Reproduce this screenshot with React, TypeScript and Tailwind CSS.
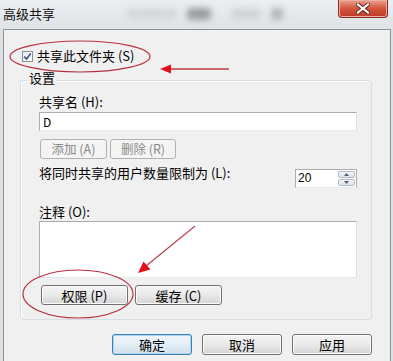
import React from "react";

const FONT = { fontFamily: '"Noto Sans CJK SC", "Noto Sans", sans-serif' };

function WinButton({
  label,
  className = "",
  disabled = false,
  isDefault = false,
}: {
  label: string;
  className?: string;
  disabled?: boolean;
  isDefault?: boolean;
}) {
  if (disabled) {
    return (
      <div
        className={`flex items-center justify-center rounded-[3px] border border-[#adb2b5] bg-[#f4f4f4] text-[12.5px] leading-none text-[#8a8a8a] ${className}`}
      >
        {label}
      </div>
    );
  }
  if (isDefault) {
    return (
      <div
        className={`flex items-center justify-center rounded-[3px] border border-[#3c7fb1] bg-gradient-to-b from-[#f0f6fa] via-[#e3eef6] to-[#cfdfea] text-[13px] leading-none text-black shadow-[inset_0_0_0_1px_#a9d6f3] ${className}`}
      >
        {label}
      </div>
    );
  }
  return (
    <div
      className={`flex items-center justify-center rounded-[3px] border border-[#707070] bg-gradient-to-b from-[#f4f4f4] via-[#e9e9e9] to-[#d4d4d4] text-[13px] leading-none text-black shadow-[inset_0_0_0_1px_#fbfbfb] ${className}`}
    >
      {label}
    </div>
  );
}

export default function App() {
  return (
    <div
      className="relative h-[361px] w-[393px] overflow-hidden bg-[#dde1e6] text-black"
      style={FONT}
    >
      {/* title bar */}
      <div className="flex h-[29px] items-start bg-gradient-to-b from-[#eceef0] to-[#dfe2e6]">
        <span className="pl-[3px] pt-[6px] text-[13px] leading-[16px] text-[#111]">高级共享</span>
        <div className="ml-[72px] mt-[9px] h-[10px] w-[50px] rounded-sm bg-[#d4d6d9] blur-[3px]" />
        <div className="ml-[10px] mt-[8px] h-[12px] w-[24px] rounded-sm bg-[#9a9da1] blur-[3px]" />
        <div className="ml-[20px] mt-[9px] h-[10px] w-[30px] rounded-sm bg-[#d0d2d5] blur-[3px]" />
        <div className="ml-[10px] mt-[8px] h-[12px] w-[12px] rounded-sm bg-[#b2b5b9] blur-[3px]" />
        <div className="ml-auto mr-[5px] flex h-[18px] w-[50px] items-center justify-center rounded-b-[4px] border border-t-0 border-[#8a2a1e] bg-gradient-to-b from-[#e8a08e] via-[#d2553c] to-[#c0392a] shadow-[inset_0_0_0_1px_#eab0a2]">
          <svg width="14" height="11" viewBox="0 0 14 11">
            <path
              d="M2 1.5 L12 9.5 M12 1.5 L2 9.5"
              stroke="#5a2018"
              strokeWidth="4"
              strokeLinecap="square"
            />
            <path
              d="M2 1.5 L12 9.5 M12 1.5 L2 9.5"
              stroke="#ffffff"
              strokeWidth="2.2"
              strokeLinecap="square"
            />
          </svg>
        </div>
      </div>

      {/* client area */}
      <div className="ml-[3px] mr-[2px] flex h-[332px] flex-col border border-b-0 border-[#8e9297] bg-[#f0f0f0]">
        {/* share checkbox */}
        <div className="ml-[18px] mt-[18px] flex h-[16px] items-center gap-[4px]">
          <div className="flex h-[11px] w-[11px] items-center justify-center border border-[#8f8f8f] bg-gradient-to-br from-[#e6e9ef] to-[#ffffff]">
            <svg width="9" height="9" viewBox="0 0 9 9">
              <path d="M1.2 4.6 L3.5 7 L7.8 1.4" fill="none" stroke="#3b4f8c" strokeWidth="1.6" />
            </svg>
          </div>
          <span className="text-[13px] leading-[16px]">共享此文件夹 (S)</span>
        </div>

        {/* settings group */}
        <div className="relative ml-[16px] mt-[16px] flex h-[240px] w-[352px] flex-col rounded-[3px] border border-[#d5dfe5] pl-[18px] shadow-[inset_1px_1px_0_#ffffff]">
          <span className="absolute left-[7px] top-[-11px] bg-[#f0f0f0] px-[1px] text-[13px] leading-[16px]">设置</span>

          <span className="mt-[13px] text-[13px] leading-[16px]">共享名 (H):</span>
          <div className="mt-[2px] flex h-[19px] w-[318px] items-center border border-[#abadb3] border-b-[#e3e9ef] border-r-[#dbdfe6] bg-white pl-[3px] text-[12px] leading-none">
            D
          </div>

          <div className="ml-px mt-[8px] flex gap-[3px]">
            <WinButton label="添加 (A)" disabled className="h-[20px] w-[67px]" />
            <WinButton label="删除 (R)" disabled className="h-[20px] w-[66px]" />
          </div>

          <div className="mt-[10px] flex w-[318px] items-start justify-between">
            <span className="-mt-[4px] text-[13px] leading-[16px]">将同时共享的用户数量限制为 (L):</span>
            <div className="flex h-[19px] w-[62px] border border-[#abadb3] border-b-[#e3e9ef] bg-white">
              <span className="flex-1 pl-[2px] text-[12px] leading-[17px]" style={{ fontFamily: '"Liberation Sans", sans-serif' }}>
                20
              </span>
              <div className="flex w-[19px] flex-col gap-px p-px">
                <div className="flex flex-1 items-center justify-center rounded-[2px] border border-[#b6bcc6] bg-gradient-to-b from-[#f3f5f8] to-[#dde3ea]">
                  <svg width="5" height="3" viewBox="0 0 5 3">
                    <path d="M0 3 L2.5 0 L5 3 Z" fill="#4d6185" />
                  </svg>
                </div>
                <div className="flex flex-1 items-center justify-center rounded-[2px] border border-[#b6bcc6] bg-gradient-to-b from-[#f3f5f8] to-[#dde3ea]">
                  <svg width="5" height="3" viewBox="0 0 5 3">
                    <path d="M0 0 L2.5 3 L5 0 Z" fill="#4d6185" />
                  </svg>
                </div>
              </div>
            </div>
          </div>

          <span className="mt-[16px] text-[13px] leading-[16px]">注释 (O):</span>
          <div className="mt-[1px] h-[57px] w-[318px] border border-[#abadb3] border-b-[#e3e9ef] border-r-[#dbdfe6] bg-white" />

          <div className="ml-[2px] mt-[7px] flex gap-[7px]">
            <WinButton label="权限 (P)" className="h-[20px] w-[87px]" />
            <WinButton label="缓存 (C)" className="h-[20px] w-[87px]" />
          </div>
        </div>

        {/* dialog buttons */}
        <div className="mr-[18px] mt-[14px] flex justify-end gap-[10px]">
          <WinButton label="确定" isDefault className="h-[21px] w-[80px]" />
          <WinButton label="取消" className="h-[21px] w-[80px]" />
          <WinButton label="应用" className="h-[21px] w-[80px]" />
        </div>
      </div>

      {/* red annotations drawn over the screenshot */}
      <svg
        className="pointer-events-none absolute left-0 top-0"
        width="393"
        height="361"
        viewBox="0 0 393 361"
      >
        <ellipse cx="80" cy="56.5" rx="70" ry="15.5" fill="none" stroke="#b8303e" strokeWidth="1.2" />
        <line x1="168" y1="69" x2="229" y2="69" stroke="#c23a44" strokeWidth="1.5" />
        <path d="M160 69 L171 64.5 L171 73.5 Z" fill="#e3101c" />

        <ellipse cx="78" cy="294" rx="55" ry="24" fill="none" stroke="#b8303e" strokeWidth="1.2" />
        <line x1="195" y1="226" x2="146" y2="266" stroke="#b9404a" strokeWidth="1.1" />
        <path d="M138 273 L143.5 261.5 L150.5 269.5 Z" fill="#e3101c" />
      </svg>
    </div>
  );
}
